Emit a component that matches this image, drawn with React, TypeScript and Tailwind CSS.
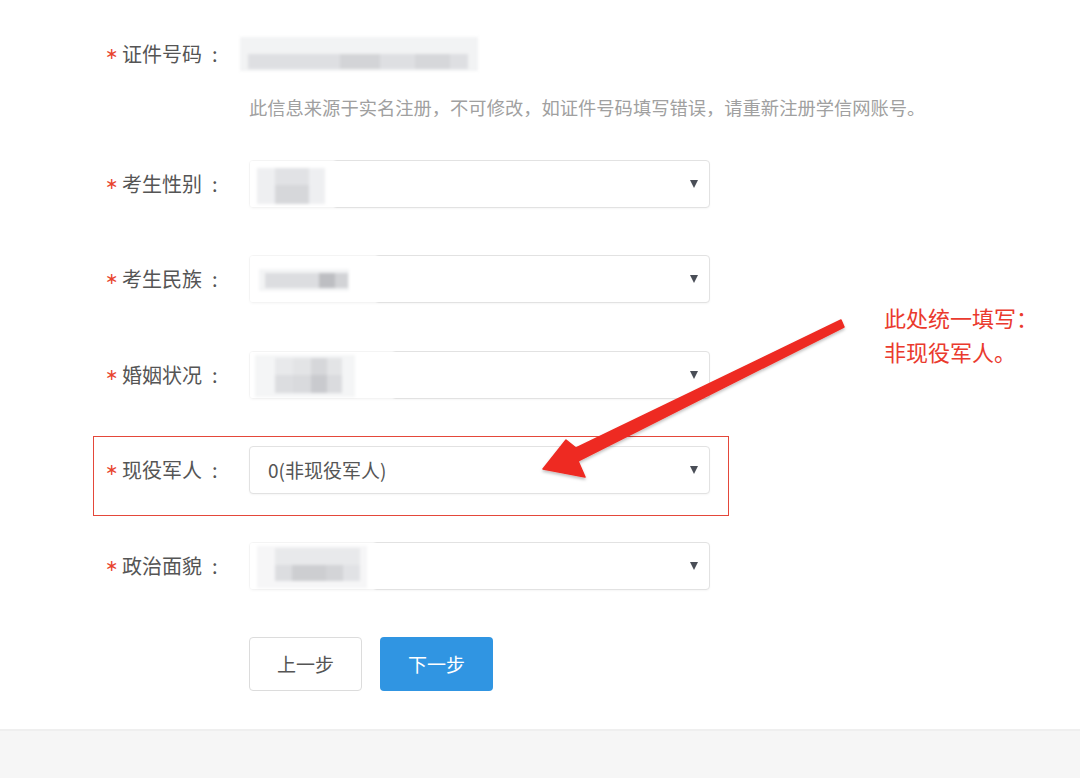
const font = { fontFamily: '"Noto Sans CJK SC", "Noto Sans", sans-serif' };

type Block = { x: number; y: number; w: number; h: number; c: string };

// blurred values, positions relative to the select box
const mosaics: Record<string, { cover: number; blocks: Block[] }> = {
  gender: {
    cover: 86,
    blocks: [
      { x: 8, y: 8, w: 68, h: 36, c: '#eeeff1' },
      { x: 26, y: 8, w: 34, h: 17, c: '#e1e2e5' },
      { x: 26, y: 25, w: 34, h: 19, c: '#d6d7da' },
    ],
  },
  nation: {
    cover: 128,
    blocks: [
      { x: 10, y: 14, w: 90, h: 22, c: '#f3f4f5' },
      { x: 16, y: 18, w: 54, h: 15, c: '#dcdde0' },
      { x: 70, y: 18, w: 16, h: 15, c: '#bdbec2' },
      { x: 86, y: 18, w: 13, h: 15, c: '#d2d3d6' },
    ],
  },
  marriage: {
    cover: 145,
    blocks: [
      { x: 6, y: 4, w: 100, h: 42, c: '#f4f5f6' },
      { x: 26, y: 7, w: 18, h: 17, c: '#e8e9eb' },
      { x: 44, y: 7, w: 18, h: 17, c: '#e3e4e6' },
      { x: 62, y: 7, w: 16, h: 17, c: '#d6d7da' },
      { x: 78, y: 7, w: 15, h: 17, c: '#e3e4e6' },
      { x: 26, y: 24, w: 18, h: 18, c: '#dcdde0' },
      { x: 44, y: 24, w: 18, h: 18, c: '#d9dadd' },
      { x: 62, y: 24, w: 16, h: 18, c: '#c9cace' },
      { x: 78, y: 24, w: 15, h: 18, c: '#dadbde' },
    ],
  },
  politics: {
    cover: 126,
    blocks: [
      { x: 8, y: 4, w: 110, h: 42, c: '#f6f6f7' },
      { x: 26, y: 6, w: 85, h: 17, c: '#e8e9eb' },
      { x: 26, y: 23, w: 17, h: 16, c: '#dcdde0' },
      { x: 43, y: 23, w: 34, h: 16, c: '#cdced1' },
      { x: 77, y: 23, w: 17, h: 16, c: '#d3d4d7' },
      { x: 94, y: 23, w: 17, h: 16, c: '#e1e2e5' },
    ],
  },
};

function Label({ text }: { text: string }) {
  return (
    <div className="flex w-[144px] shrink-0 items-center">
      <span
        className="w-[17px] text-[16px] leading-none text-[#e8452f]"
        style={{ fontFamily: '"DejaVu Sans", sans-serif' }}
      >
        ∗
      </span>
      <span className="text-[20px] text-[#555]">{text}</span>
      <span className="ml-[10px] text-[20px] text-[#555]">:</span>
    </div>
  );
}

function Select({ value, mosaic }: { value?: string; mosaic?: string }) {
  const m = mosaic ? mosaics[mosaic] : null;
  return (
    <div className="relative flex h-[48px] w-[461px] items-center justify-between rounded-[4px] border border-[#e2e2e2] bg-white pl-[18px] pr-[11px] shadow-[0_1px_2px_rgba(0,0,0,0.04)]">
      <span className="text-[19px] text-[#555]">{value}</span>
      <span className="h-0 w-0 border-x-[4.5px] border-t-[8px] border-x-transparent border-t-[#4a4e57]" />
      {m && (
        <div
          className="absolute -left-px -top-px h-[48px] bg-white blur-[1.5px]"
          style={{ width: m.cover }}
        >
          {m.blocks.map((b, i) => (
            <div
              key={i}
              className="absolute"
              style={{ left: b.x, top: b.y, width: b.w, height: b.h, background: b.c }}
            />
          ))}
        </div>
      )}
    </div>
  );
}

const rows = [
  { label: '考生性别', mosaic: 'gender', mt: 'mt-[41px]' },
  { label: '考生民族', mosaic: 'nation', mt: 'mt-[47px]' },
  { label: '婚姻状况', mosaic: 'marriage', mt: 'mt-[48px]' },
  { label: '现役军人', value: '0(非现役军人)', mt: 'mt-[47px]' },
  { label: '政治面貌', mosaic: 'politics', mt: 'mt-[48px]' },
];

export default function App() {
  return (
    <div className="relative h-[778px] w-[1080px] overflow-hidden bg-white" style={font}>
      <div className="pl-[105px] pt-[32px]">
        <div className="flex h-[44px] items-center">
          <Label text="证件号码" />
          <div className="relative h-[34px] w-[238px] -translate-x-[9px] blur-[1.5px]">
            <div className="absolute inset-0 bg-[#f2f3f4]" />
            <div className="absolute left-[8px] top-[17px] h-[15px] w-[220px] bg-[#dedfe2]" />
            <div className="absolute left-[100px] top-[17px] h-[15px] w-[40px] bg-[#d3d4d7]" />
            <div className="absolute left-[175px] top-[17px] h-[15px] w-[35px] bg-[#d6d7da]" />
          </div>
        </div>
        <p className="ml-[144px] mt-[19px] text-[18.3px] leading-[24px] text-[#a0a0a0]">
          此信息来源于实名注册，不可修改，如证件号码填写错误，请重新注册学信网账号。
        </p>

        {rows.map((r) => (
          <div key={r.label} className={`flex items-center ${r.mt}`}>
            <Label text={r.label} />
            <Select value={r.value} mosaic={r.mosaic} />
          </div>
        ))}

        <div className="ml-[144px] mt-[47px] flex gap-[18px]">
          <button className="h-[54px] w-[113px] rounded-[4px] border border-[#dcdcdc] bg-white text-[19px] text-[#555]">
            上一步
          </button>
          <button className="h-[54px] w-[113px] rounded-[4px] bg-[#3095e2] text-[19px] text-white">
            下一步
          </button>
        </div>
      </div>

      <div className="mt-[38px] h-[49px] border-t-2 border-[#efefef] bg-[#f6f6f6]" />

      {/* annotation overlay */}
      <div className="absolute left-[93px] top-[436px] h-[80px] w-[636px] border-[1.5px] border-[#e4473a]" />
      <div className="absolute left-[884px] top-[300px] text-[22px] leading-[34px] text-[#ea3a2e]">
        <p>此处统一填写：</p>
        <p>非现役军人。</p>
      </div>
      <svg
        className="pointer-events-none absolute left-0 top-0"
        width="1080"
        height="778"
        viewBox="0 0 1080 778"
      >
        <defs>
          <filter id="sh" x="-10%" y="-10%" width="120%" height="130%">
            <feDropShadow dx="0" dy="2" stdDeviation="1.5" floodColor="#000" floodOpacity="0.25" />
          </filter>
        </defs>
        <polygon
          points="841,320 576,448 566,440 543,469 585,477 578,461 844,327"
          fill="#ee2b22"
          stroke="#ee2b22"
          strokeWidth="1.5"
          strokeLinejoin="round"
          filter="url(#sh)"
        />
      </svg>
    </div>
  );
}
